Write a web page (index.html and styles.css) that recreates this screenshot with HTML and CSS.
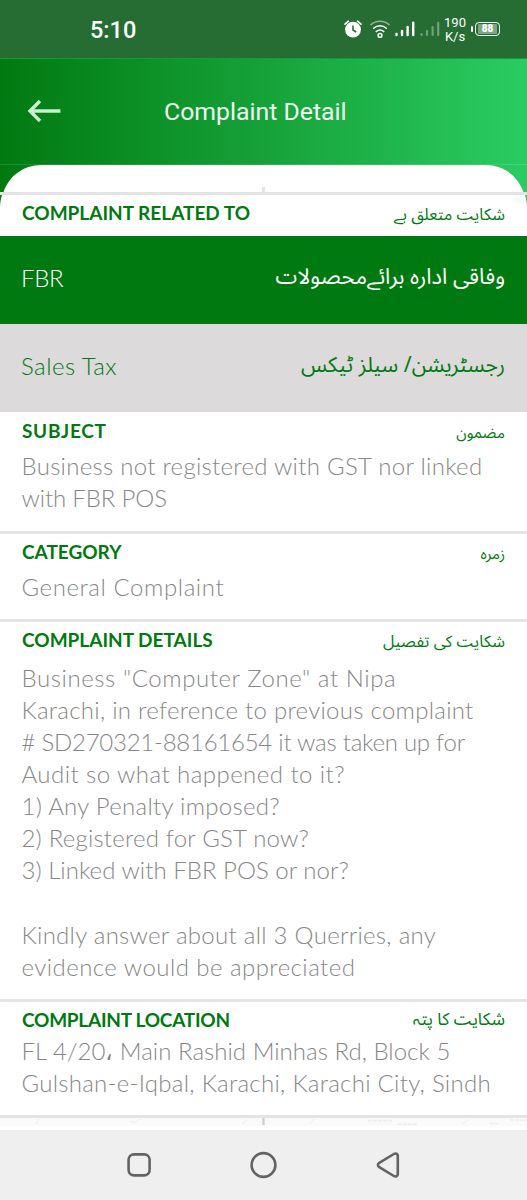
FILE: index.html
```html
<!doctype html>
<html lang="en">
<head>
    <meta charset="UTF-8">
    <meta name="viewport" content="width=device-width, initial-scale=1.0">
    <title>Complaint Detail</title>
    <link rel="stylesheet" href="styles.css">
</head>
<body>
    <div class="status">
        <span class="time">5:10</span>
        <div class="status-icons">
            <svg class="alarm" width="18" height="18" viewBox="0 0 18 18">
                <circle cx="9" cy="9.6" r="7.9" fill="#fff"/>
                <path d="M1 4.2 4.4 1.2M17 4.2 13.6 1.2" stroke="#fff" stroke-width="1.6" stroke-linecap="round"/>
                <path d="M9 5.4v4.6l3.2 2" fill="none" stroke="#266d34" stroke-width="1.6"/>
            </svg>
            <svg class="wifi" width="20" height="19" viewBox="0 0 20 19" fill="none" stroke="#fff" stroke-width="1.5" stroke-linecap="round">
                <path d="M1 4.6C6 .1 14 .1 19 4.6" stroke-opacity=".5"/>
                <path d="M3.6 8.2c3.8-3.3 9-3.3 12.8 0"/>
                <path d="M6.2 11.6c2.3-1.9 5.3-1.9 7.6 0"/>
                <circle cx="10" cy="15.4" r="1.9"/>
            </svg>
            <svg class="signal" width="20" height="16" viewBox="0 0 20 16" stroke="#fff" stroke-width="2.4" stroke-linecap="round">
                <path d="M1.5 13v1M7 10v4M12.6 6v8M18.2 1.8V14"/>
            </svg>
            <svg class="signal dim" width="20" height="16" viewBox="0 0 20 16" stroke="#fff" stroke-width="2.2" stroke-linecap="round">
                <path d="M1.5 13v1M7 10v4M12.6 6v8M18.2 1.8V14"/>
            </svg>
            <div class="speed"><span>190</span><span>K/s</span></div>
            <div class="battery"><span>88</span></div>
        </div>
    </div>

    <header class="header">
        <svg class="back" width="34" height="24" viewBox="0 0 34 24" fill="none" stroke="#c9f0d0" stroke-width="3.4">
            <path d="M33.4 12H3M13 2 3 12l10 10"/>
        </svg>
        <h1>Complaint Detail</h1>
    </header>

    <main class="content">
        <div class="card-top"></div>
        <section class="related">
            <div class="head">
                <h2>COMPLAINT RELATED TO</h2>
                <span class="urdu" lang="ur" dir="rtl">شکایت متعلق ہے</span>
            </div>
        </section>
        <div class="row row-green">
            <span class="fbr">FBR</span>
            <span class="urdu-big" lang="ur" dir="rtl">وفاقی ادارہ برائےمحصولات</span>
        </div>
        <div class="row row-gray">
            <span class="mid">Sales Tax</span>
            <span class="urdu-big narrow" lang="ur" dir="rtl">رجسٹریشن/ سیلز ٹیکس</span>
        </div>
        <section class="subject">
            <div class="head">
                <h2 class="loose">SUBJECT</h2>
                <span class="urdu small" lang="ur" dir="rtl">مضمون</span>
            </div>
            <p>
                <span>Business not registered with GST nor linked</span>
                <span class="tight">with FBR POS</span>
            </p>
        </section>
        <section class="category">
            <div class="head">
                <h2>CATEGORY</h2>
                <span class="urdu small" lang="ur" dir="rtl">زمرہ</span>
            </div>
            <p><span class="wide">General Complaint</span></p>
        </section>
        <section class="details">
            <div class="head">
                <h2>COMPLAINT DETAILS</h2>
                <span class="urdu" lang="ur" dir="rtl">شکایت کی تفصیل</span>
            </div>
            <p>
                <span class="wide">Business "Computer Zone" at Nipa</span>
                <span>Karachi, in reference to previous complaint</span>
                <span class="tighter"># SD270321-88161654 it was taken up for</span>
                <span class="mid">Audit so what happened to it?</span>
                <span>1) Any Penalty imposed?</span>
                <span class="less">2) Registered for GST now?</span>
                <span class="snug">3) Linked with FBR POS or nor?</span>
                <span>&nbsp;</span>
                <span>Kindly answer about all 3 Querries, any</span>
                <span class="mid">evidence would be appreciated</span>
            </p>
        </section>
        <section class="location">
            <div class="head">
                <h2 class="close">COMPLAINT LOCATION</h2>
                <span class="urdu bold" lang="ur" dir="rtl">شکایت کا پتہ</span>
            </div>
            <p>
                <span class="snug">FL 4/20، Main Rashid Minhas Rd, Block 5</span>
                <span>Gulshan-e-Iqbal, Karachi, Karachi City, Sindh</span>
            </p>
        </section>
        <!-- top edge of the map -->
        <svg class="map" width="527" height="12" viewBox="0 0 527 12" fill="none" stroke="#ececec">
            <rect width="527" height="8" fill="#fafafa" stroke="none"/>
            <path d="M36 6l3-5M130 3l4 2 6-4M242 6l5-4M311 5l3-4M462 6l6-4" stroke-width="1"/>
            <path d="M368 2.5h25M510 2h17M398 6.2h20M490 5.5h8" stroke-width="1.5" stroke-dasharray="4 1"/>
            <path d="M263.5 0v7" stroke="#cfcfcf" stroke-width="2.4"/>
        </svg>
    </main>

    <nav class="navbar">
        <svg width="527" height="70" viewBox="0 0 527 70" fill="none" stroke="#636363" stroke-width="2.6" stroke-linejoin="round">
            <rect x="128.6" y="24.4" width="21" height="21" rx="5.4"/>
            <circle cx="263.5" cy="35" r="11.9"/>
            <path d="M379.3 32.8 393.8 24c2-1.2 4-.2 4 2v18c0 2.2-2 3.2-4 2l-14.5-8.8q-2.8-2.2 0-4.4z"/>
        </svg>
    </nav>
</body>
</html>
```
FILE: styles.css
```css
*{
    box-sizing: border-box;
}
body{
    margin: 0;
    width: 527px;
    height: 1200px;
    overflow: hidden;
    background: #fff;
    font-family: Lato, "Open Sans", sans-serif;
}
h1, h2, p{
    margin: 0;
}
.status{
    display: flex;
    justify-content: space-between;
    height: 58px;
    padding: 0 27px 0 90px;
    background: #266d34;
    color: #fff;
    font-family: Roboto, sans-serif;
}
.time{
    font-size: 23.5px;
    font-weight: 500;
    line-height: 60px;
}
.status-icons{
    display: flex;
    align-items: center;
    height: 58px;
}
.wifi{
    margin-left: 8px;
}
.signal{
    margin-left: 5px;
}
.dim{
    opacity: .35;
}
.speed{
    display: flex;
    flex-direction: column;
    align-items: center;
    width: 22px;
    margin-left: 4px;
    padding-top: 2px;
    font-size: 13px;
    font-weight: 400;
    line-height: 14px;
}
.battery{
    position: relative;
    width: 25px;
    height: 14px;
    margin-left: 9px;
    padding: 1px 2px;
    border: 1.5px solid #fff;
    border-radius: 4px;
    font-size: 10px;
    font-weight: 900;
    line-height: 10px;
    text-align: center;
}
.battery span{
    display: block;
    height: 10px;
    border-radius: 1px;
    background: rgba(255, 255, 255, .4);
}
.battery::before{
    content: "";
    position: absolute;
    left: -5px;
    top: 3px;
    width: 2px;
    height: 6px;
    border-radius: 1px;
    background: #fff;
}
.header{
    display: flex;
    align-items: center;
    height: 107px;
    padding: 0 27px;
    background: linear-gradient(90deg, #007a10, #18a63d 55%, #2acc62);
    border-top: 1px solid #169a3c;
    border-bottom: 1px solid rgba(255, 255, 255, .12);
}
.back{
    margin-top: -1px;
}
.header h1{
    margin-left: 103px;
    color: #eefbf0;
    font-family: Roboto, sans-serif;
    font-size: 24.8px;
    font-weight: 400;
}
.content{
    height: 965px;
    background: linear-gradient(90deg, #007a10, #18a63d 55%, #2acc62) no-repeat;
    background-size: 100% 50px;
}
/* rounded shoulders of the sheet, the divider runs the full width */
.card-top{
    height: 30px;
    border-bottom: 3px solid #e4e4e4;
    background: linear-gradient(#e4e4e4, #e4e4e4) 262px 22px / 3px 5px no-repeat, #fff;
    clip-path: path("M0 30V27H3.5C9 12 22 0 42 0H485C505 0 518 12 523.5 27H527V30Z");
}
.head{
    display: flex;
    justify-content: space-between;
    align-items: baseline;
    height: 24px;
    padding: 0 22px;
    line-height: 24px;
    color: #007a10;
}
h2{
    font-size: 19px;
    font-weight: 700;
}
.loose{
    letter-spacing: .7px;
}
.close{
    letter-spacing: -.25px;
}
.urdu{
    font-family: "Noto Sans", "Noto Sans Arabic", serif;
    font-size: 16.3px;
    line-height: 24px;
}
.small{
    font-size: 15.2px;
}
.bold{
    position: relative;
    top: -2px;
    font-size: 17.2px;
}
.related{
    height: 41px;
    padding-top: 6px;
    background: #fff;
    clip-path: path("M2 0H525C526.3 4 527 8 527 13V41H0V13C0 8 .7 4 2 0Z");
}
.row{
    display: flex;
    justify-content: space-between;
    height: 88px;
    padding: 0 22px 0 21px;
    font-size: 24px;
    font-weight: 300;
    line-height: 84px;
}
.row-green{
    background: #007a10;
    color: #fff;
}
.row-gray{
    background: #dcdadb;
    color: #007a10;
}
.fbr{
    letter-spacing: -.3px;
}
.urdu-big{
    font-family: "Noto Sans", "Noto Sans Arabic", serif;
    font-size: 22px;
    font-weight: 400;
    line-height: 78px;
}
.narrow{
    font-size: 21.3px;
    line-height: 80px;
}
.subject, .category, .details, .location{
    border-bottom: 3px solid #e4e4e4;
}
.subject{
    height: 122px;
    padding-top: 7px;
}
.category{
    height: 88px;
    padding-top: 6px;
}
.details{
    height: 380px;
    padding-top: 6px;
}
.location{
    height: 116px;
    padding-top: 6px;
}
p{
    padding: 7px 0 0 21.5px;
    color: #878787;
    font-size: 24px;
    font-weight: 300;
    line-height: 32.15px;
}
.details p{
    padding-top: 9.5px;
}
.location p{
    padding-top: 3px;
}
p span{
    display: block;
    letter-spacing: .28px;
    white-space: nowrap;
}
p .wide{
    letter-spacing: .58px;
}
.mid, p .mid{
    letter-spacing: .45px;
}
p .less{
    letter-spacing: .2px;
}
p .snug{
    letter-spacing: .02px;
}
p .tight{
    letter-spacing: -.15px;
}
p .tighter{
    letter-spacing: -.25px;
}
.map{
    display: block;
}
.navbar{
    height: 70px;
    background: #efefef;
}
.navbar svg{
    display: block;
}
```
